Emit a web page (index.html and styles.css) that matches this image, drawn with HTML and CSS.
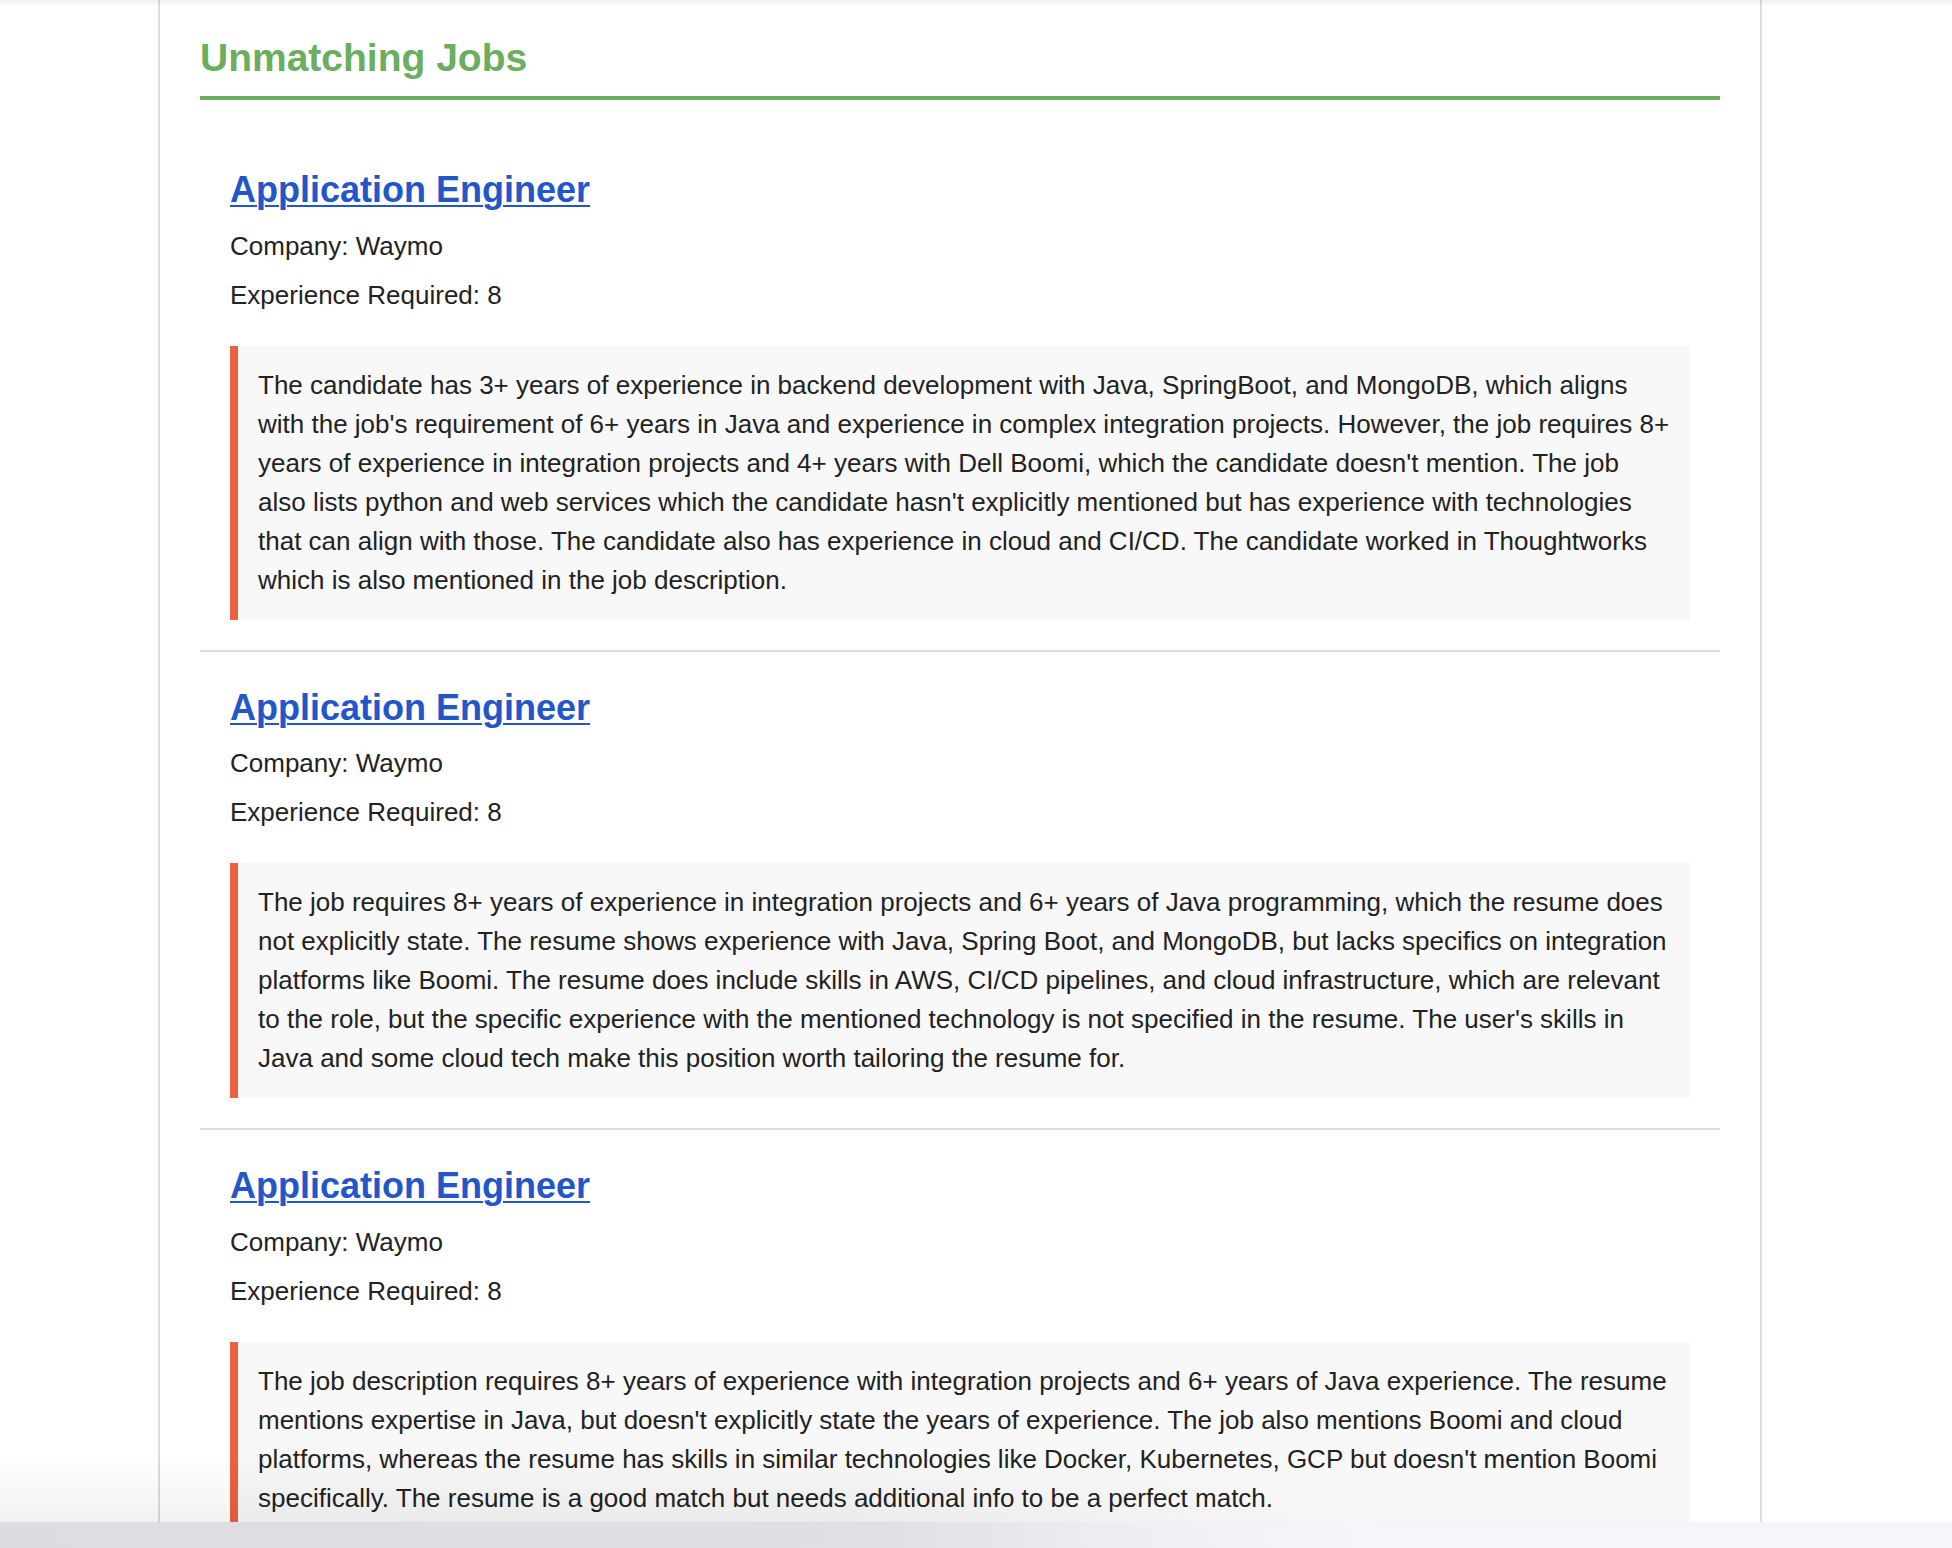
FILE: index.html
```html
<!DOCTYPE html>
<html lang="en">
<head>
<meta charset="utf-8">
<title>Unmatching Jobs</title>
<link rel="stylesheet" href="styles.css">
</head>
<body>
<div class="top-shade"></div>
<main class="page">
  <h2 class="section-title">Unmatching Jobs</h2>

  <section class="job">
    <h3 class="job-title"><a href="#">Application Engineer</a></h3>
    <p class="meta">Company: Waymo</p>
    <p class="meta">Experience Required: 8</p>
    <div class="reason">The candidate has 3+ years of experience in backend development with Java, SpringBoot, and MongoDB, which aligns with the job's requirement of 6+ years in Java and experience in complex integration projects. However, the job requires 8+ years of experience in integration projects and 4+ years with Dell Boomi, which the candidate doesn't mention. The job also lists python and web services which the candidate hasn't explicitly mentioned but has experience with technologies that can align with those. The candidate also has experience in cloud and CI/CD. The candidate worked in Thoughtworks which is also mentioned in the job description.</div>
  </section>

  <section class="job">
    <h3 class="job-title"><a href="#">Application Engineer</a></h3>
    <p class="meta">Company: Waymo</p>
    <p class="meta">Experience Required: 8</p>
    <div class="reason">The job requires 8+ years of experience in integration projects and 6+ years of Java programming, which the resume does not explicitly state. The resume shows experience with Java, Spring Boot, and MongoDB, but lacks specifics on integration platforms like Boomi. The resume does include skills in AWS, CI/CD pipelines, and cloud infrastructure, which are relevant to the role, but the specific experience with the mentioned technology is not specified in the resume. The user's skills in Java and some cloud tech make this position worth tailoring the resume for.</div>
  </section>

  <section class="job">
    <h3 class="job-title"><a href="#">Application Engineer</a></h3>
    <p class="meta">Company: Waymo</p>
    <p class="meta">Experience Required: 8</p>
    <div class="reason">The job description requires 8+ years of experience with integration projects and 6+ years of Java experience. The resume mentions expertise in Java, but doesn't explicitly state the years of experience. The job also mentions Boomi and cloud platforms, whereas the resume has skills in similar technologies like Docker, Kubernetes, GCP but doesn't mention Boomi specifically. The resume is a good match but needs additional info to be a perfect match.</div>
  </section>
</main>
<div class="bottom-bar"></div>
</body>
</html>
```
FILE: styles.css
```css
html {
  overflow: hidden;
}

body {
  margin: 0;
  background: #ffffff;
  font-family: "Liberation Sans", Arial, sans-serif;
  color: #222222;
}

.page {
  box-sizing: border-box;
  width: 1604px;
  min-height: 100vh;
  margin: 0 0 0 158px;
  padding: 35px 40px 0;
  border-left: 2px solid #dcdcdc;
  border-right: 2px solid #dcdcdc;
}

.section-title {
  margin: 0 0 34px;
  padding-bottom: 16px;
  border-bottom: 4px solid #6aae5e;
  font-size: 39px;
  line-height: 45px;
  font-weight: bold;
  color: #6aae5e;
}

.job {
  padding: 35px 30px 30px;
  border-bottom: 2px solid #dddddd;
}

.job-title {
  margin: 0 0 16.5px;
  font-size: 36px;
  line-height: 41px;
  font-weight: bold;
}

.job-title a {
  color: #2356c8;
  text-decoration: underline;
  text-decoration-thickness: 2px;
  text-underline-offset: 3px;
}

.meta {
  margin: 0 0 10px;
  font-size: 26px;
  line-height: 39px;
}

.reason {
  margin-top: 31px;
  padding: 20px 18px 20px 20px;
  border-left: 8px solid #ec6140;
  background: #f8f8f8;
  font-size: 26px;
  line-height: 39px;
}

.top-shade {
  position: fixed;
  top: 0;
  left: 0;
  right: 0;
  height: 6px;
  background: linear-gradient(to bottom, rgba(0, 0, 0, 0.07), rgba(0, 0, 0, 0));
  z-index: 5;
}

.bottom-bar {
  position: fixed;
  left: 0;
  right: 0;
  bottom: 0;
  height: 26px;
  background: linear-gradient(to right, #dcdde1 0%, #dfe0e4 45%, #eeeff2 58%, #f5f6f9 70%, #f5f6f9 100%);
  z-index: 5;
}

.bottom-bar::before {
  content: "";
  position: absolute;
  left: 0;
  bottom: 26px;
  width: 1400px;
  height: 70px;
  background: linear-gradient(to bottom, rgba(0, 0, 0, 0), rgba(0, 0, 0, 0.05));
  -webkit-mask-image: linear-gradient(to right, #000 0%, #000 60%, transparent 100%);
  mask-image: linear-gradient(to right, #000 0%, #000 60%, transparent 100%);
}
```
